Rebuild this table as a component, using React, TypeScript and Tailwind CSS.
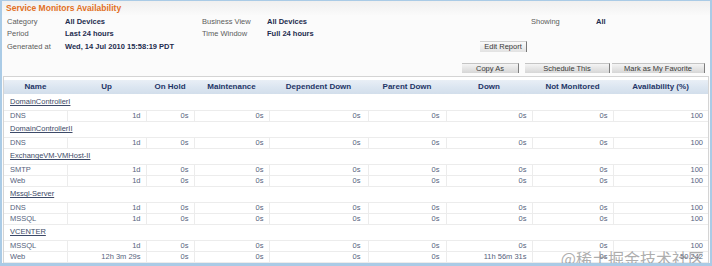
import React from 'react';

type Row = { name: string; up: string; down?: string; avail?: string };
type Group = { title: string; rows: Row[] };

const groups: Group[] = [
  { title: 'DomainControllerI', rows: [{ name: 'DNS', up: '1d' }] },
  { title: 'DomainControllerII', rows: [{ name: 'DNS', up: '1d' }] },
  {
    title: 'ExchangeVM-VMHost-II',
    rows: [
      { name: 'SMTP', up: '1d' },
      { name: 'Web', up: '1d' },
    ],
  },
  {
    title: 'Mssql-Server',
    rows: [
      { name: 'DNS', up: '1d' },
      { name: 'MSSQL', up: '1d' },
    ],
  },
  {
    title: 'VCENTER',
    rows: [
      { name: 'MSSQL', up: '1d' },
      { name: 'Web', up: '12h 3m 29s', down: '11h 56m 31s', avail: '50.242' },
    ],
  },
];

const columns = [
  { label: 'Name', w: 'w-[63px]' },
  { label: 'Up', w: 'w-[79px]' },
  { label: 'On Hold', w: 'w-[48px]' },
  { label: 'Maintenance', w: 'w-[75px]' },
  { label: 'Dependent Down', w: 'w-[99px]' },
  { label: 'Parent Down', w: 'w-[78px]' },
  { label: 'Down', w: 'w-[86px]' },
  { label: 'Not Monitored', w: 'w-[81px]' },
  { label: 'Availability (%)', w: 'w-[95px]' },
];

function Btn({ label, className }: { label: string; className: string }) {
  return (
    <div
      className={`flex items-center justify-center bg-gradient-to-b from-[#f4f4f4] to-[#d6d6d6] border-t border-[#c4c4c4] border-r border-r-[#7d7d7d] text-[7.5px] leading-none text-[#3a3a3a] ${className}`}
    >
      {label}
    </div>
  );
}

function Info({ label, value, lw, vw }: { label: string; value: string; lw: string; vw: string }) {
  return (
    <>
      <span className={`${lw} shrink-0 text-[#5c5c5c]`}>{label}</span>
      <span className={`${vw} shrink-0 font-bold text-[#1d2c4e]`}>{value}</span>
    </>
  );
}

export default function App() {
  return (
    <div className="relative w-[712px] h-[266px] overflow-hidden border-t border-x-2 border-b-[3px] border-[#aacbe6] bg-[#fbfbfb] font-['Liberation_Sans',Arial,sans-serif]">
      {/* Title */}
      <div className="h-[14px] pl-[4px] flex items-center bg-gradient-to-b from-[#f0f0f0] to-[#fafafa]">
        <span className="text-[8.5px] font-bold text-[#e2701f] leading-none">Service Monitors Availability</span>
      </div>

      {/* Report info */}
      <div className="mt-[1px] pl-[5px] text-[7.5px] leading-none">
        <div className="h-[12px] flex items-center">
          <Info label="Category" value="All Devices" lw="w-[58px]" vw="w-[137px]" />
          <Info label="Business View" value="All Devices" lw="w-[65px]" vw="w-[264px]" />
          <Info label="Showing" value="All" lw="w-[65px]" vw="w-[40px]" />
        </div>
        <div className="h-[12px] flex items-center">
          <Info label="Period" value="Last 24 hours" lw="w-[58px]" vw="w-[137px]" />
          <Info label="Time Window" value="Full 24 hours" lw="w-[65px]" vw="w-[100px]" />
        </div>
        <div className="h-[13px] flex items-center">
          <Info label="Generated at" value="Wed, 14 Jul 2010 15:58:19 PDT" lw="w-[58px]" vw="w-[415px]" />
          <div className="flex items-center justify-center h-[11px] w-[47px] bg-gradient-to-b from-[#fbfbfb] to-[#e2e2e2] border-t border-[#d0d0d0] border-r border-r-[#777] text-[#3a3a3a]">
            Edit Report
          </div>
        </div>
      </div>

      {/* Actions */}
      <div className="mt-[10px] h-[10px] flex justify-end pr-[5px]">
        <Btn label="Copy As" className="w-[57px]" />
        <Btn label="Schedule This" className="w-[85px] ml-[6px]" />
        <Btn label="Mark as My Favorite" className="w-[93px] ml-[2px]" />
      </div>

      {/* Table */}
      <div className="mt-[3px] mx-[1px] border border-[#d4d4d4] bg-white pt-[3px] h-[187px]">
        <table className="table-fixed border-collapse w-[704px] text-[7.5px] leading-none">
          <colgroup>
            {columns.map((c) => (
              <col key={c.label} className={c.w} />
            ))}
          </colgroup>
          <thead>
            <tr className="h-[14px] bg-gradient-to-b from-[#e9eff6] via-[#dce6f1] to-[#d2deeb]">
              {columns.map((c) => (
                <th key={c.label} className="p-0 pb-[1px] text-center font-bold text-[8px] text-[#1e3567]">
                  {c.label}
                </th>
              ))}
            </tr>
          </thead>
          <tbody>
            {groups.map((g) => (
              <React.Fragment key={g.title}>
                <tr className="h-[16px]">
                  <td colSpan={9} className="p-0 pl-[6px] align-middle">
                    <span className="underline text-[#3d4a68]">{g.title}</span>
                  </td>
                </tr>
                {g.rows.map((r, i) => (
                  <tr key={i} className="h-[11px] border-y border-[#ececec] text-[#56637d]">
                    <td className="p-0 pl-[6px]">{r.name}</td>
                    <td className="p-0 pr-[5px] text-right border-l border-[#ececec]">{r.up}</td>
                    <td className="p-0 pr-[5px] text-right border-l border-[#ececec]">0s</td>
                    <td className="p-0 pr-[5px] text-right border-l border-[#ececec]">0s</td>
                    <td className="p-0 pr-[7px] text-right border-l border-[#ececec]">0s</td>
                    <td className="p-0 pr-[6px] text-right border-l border-[#ececec]">0s</td>
                    <td className="p-0 pr-[5px] text-right border-l border-[#ececec]">{r.down ?? '0s'}</td>
                    <td className="p-0 pr-[5px] text-right border-l border-[#ececec]">0s</td>
                    <td className="p-0 pr-[5px] text-right border-l border-[#ececec]">{r.avail ?? '100'}</td>
                  </tr>
                ))}
              </React.Fragment>
            ))}
          </tbody>
        </table>
      </div>

      {/* Watermark */}
      <div className="absolute right-[6px] bottom-[-3px] text-[16px] leading-none text-[#8a8a8a]/70 font-['Noto_Sans_CJK_SC',sans-serif] pointer-events-none">
        @稀土掘金技术社区
      </div>
    </div>
  );
}
